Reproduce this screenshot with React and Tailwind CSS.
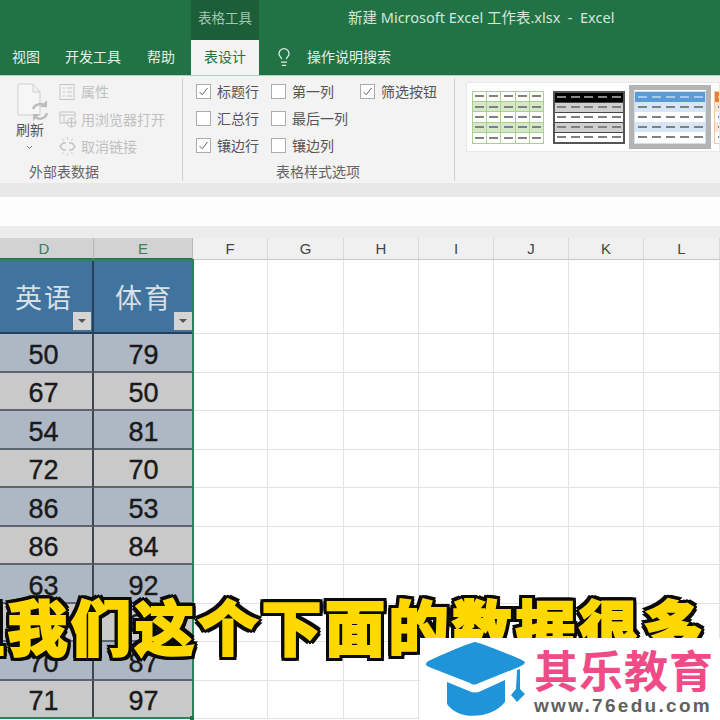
import React from "react";
import { Lightbulb } from "lucide-react";

const cjk = "font-['Noto_Sans_CJK_SC','Noto_Sans',sans-serif]";

function Check({ on }) {
  return (
    <span className="w-[15px] h-[15px] border border-[#ababab] bg-white flex items-center justify-center shrink-0">
      {on && (
        <svg width="11" height="11" viewBox="0 0 11 11" fill="none" stroke="#666" strokeWidth="1">
          <path d="M1.5 6 L4.2 8.8 L9.5 2" />
        </svg>
      )}
    </span>
  );
}

function Opt({ on, label, w }) {
  return (
    <div className="flex items-center gap-[6px] h-[27px] text-[14px] text-[#555] whitespace-nowrap" style={{ width: w }}>
      <Check on={on} />
      <span>{label}</span>
    </div>
  );
}

function DocIcon() {
  return (
    <svg width="34" height="44" viewBox="0 0 34 44" fill="none">
      <path d="M2 1 H17 L24 9 V32 H2 Z M17 1 V9 H24" stroke="#cfcfcf" strokeWidth="1" fill="#f6f6f6" />
      <path d="M17 26 a7.5 7.5 0 0 1 13 -2 M31 30 a7.5 7.5 0 0 1 -13 3" stroke="#bdbdbd" strokeWidth="2.5" />
      <path d="M31 17 v7 h-7 Z M17 38 v-7 h7 Z" fill="#bdbdbd" />
    </svg>
  );
}

function PropIcon() {
  return (
    <svg width="16" height="16" viewBox="0 0 16 16" fill="none" stroke="#c4c4c4">
      <rect x="1" y="0.5" width="14" height="15" />
      <path d="M4 4 h2 M8 4 h5 M4 8 h2 M8 8 h5 M4 12 h2 M8 12 h5" />
    </svg>
  );
}

function BrowserIcon() {
  return (
    <svg width="18" height="17" viewBox="0 0 18 17" fill="none" stroke="#c4c4c4">
      <path d="M9 12 H1 V1 H16 V7 M1 4 H16 M5 4 V12" />
      <circle cx="12.5" cy="11.5" r="4.5" fill="#ececec" />
      <path d="M8 11.5 h9 M12.5 7 v9" />
    </svg>
  );
}

function UnlinkIcon() {
  return (
    <svg width="17" height="19" viewBox="0 0 17 19" fill="none" stroke="#c4c4c4" strokeWidth="1.6">
      <path d="M7 6 H4 L1 9.5 L4 13 H7 M10 6 H13 L16 9.5 L13 13 H10" />
      <path d="M8.5 0 V3 M8.5 16 V19 M3 1.5 L5 4 M14 1.5 L12 4 M3 17.5 L5 15 M14 17.5 L12 15" strokeWidth="0.8" />
    </svg>
  );
}

function Thumb({ border, head, dash, headDash, band, line, inner, thick }) {
  const rows = [head, band, "#ffffff", band, "#ffffff"];
  return (
    <div className={`w-[72px] h-[53px] flex flex-col shrink-0 ${thick ? "border-2" : "border"}`} style={{ borderColor: border }}>
      {rows.map((bg, r) => (
        <div
          key={r}
          className="flex-1 flex"
          style={{ background: bg, borderTop: r && line ? `1px solid ${line}` : undefined }}
        >
          {[0, 1, 2, 3, 4].map((c) => (
            <div
              key={c}
              className="flex-1 flex items-center justify-center"
              style={{ borderLeft: c && inner ? `1px solid ${inner}` : undefined }}
            >
              <span className="w-[9px] h-[2px]" style={{ background: r === 0 ? headDash : dash }} />
            </div>
          ))}
        </div>
      ))}
    </div>
  );
}

const cols = ["D", "E", "F", "G", "H", "I", "J", "K", "L"];
const widths = "grid-cols-[94px_99px_75px_76px_75px_75px_75px_75px_76px]";
const rows = [
  ["50", "79"],
  ["67", "50"],
  ["54", "81"],
  ["72", "70"],
  ["86", "53"],
  ["86", "84"],
  ["63", "92"],
  ["58", "66"],
  ["70", "87"],
  ["71", "97"],
];

function Filter() {
  return (
    <span className="absolute right-[1px] bottom-[2px] w-[18px] h-[18px] bg-[#d4d4d4] flex items-center justify-center">
      <span className="border-x-[4px] border-x-transparent border-t-[4px] border-t-[#555]" />
    </span>
  );
}

export default function App() {
  return (
    <div className={`relative w-[720px] h-[720px] overflow-hidden bg-white ${cjk}`}>
      <div className="h-[75px] bg-[#217346] flex flex-col text-[14px] text-[#e4efe8]">
        <div className="h-[40px] flex">
          <div className="ml-[191px] w-[68px] bg-[#1b5e38] flex items-center justify-center pb-[5px] text-[13.5px] text-[#a4c6b0] whitespace-nowrap">
            表格工具
          </div>
          <div className="ml-[89px] flex items-center pb-[4px] text-[14.5px] text-[#d6e6dc] whitespace-nowrap font-['Noto_Sans','Noto_Sans_CJK_SC',sans-serif]">
            新建 Microsoft Excel 工作表.xlsx&nbsp; -&nbsp; Excel
          </div>
        </div>
        <div className="h-[35px] flex items-center">
          <span className="ml-[12px] w-[53px] pb-[3px]">视图</span>
          <span className="w-[82px] pb-[3px]">开发工具</span>
          <span className="w-[44px] pb-[3px]">帮助</span>
          <span className="w-[68px] h-full bg-[#f3f3f3] text-[#217346] flex items-center justify-center pb-[3px]">表设计</span>
          <Lightbulb size={20} strokeWidth={1.5} className="ml-[15px] mb-[2px] text-[#e4efe8]" />
          <span className="ml-[13px] pb-[3px]">操作说明搜索</span>
        </div>
      </div>

      <div className="h-[108px] bg-[#f3f3f3] flex border-t border-t-[#a9d3ba]">
        <div className="w-[183px] h-[103px] shrink-0 border-r border-[#d2d2d2] flex flex-col mt-[2px]">
          <div className="flex h-[84px]">
            <div className="w-[59px] pl-[16px] flex flex-col items-start pt-[5px] text-[14px] text-[#555]">
              <DocIcon />
              <span className="-mt-[8px]">刷新</span>
              <svg width="7" height="5" viewBox="0 0 7 5" fill="none" stroke="#777" className="ml-[10px] mt-[5px]">
                <path d="M1 1 L3.5 3.5 L6 1" />
              </svg>
            </div>
            <div className="flex flex-col text-[14px] text-[#c0c0c0] whitespace-nowrap">
              <div className="h-[27px] flex items-center gap-[6px]"><PropIcon /><span>属性</span></div>
              <div className="h-[28px] flex items-center gap-[4px]"><BrowserIcon /><span>用浏览器打开</span></div>
              <div className="h-[27px] flex items-center gap-[5px]"><UnlinkIcon /><span>取消链接</span></div>
            </div>
          </div>
          <div className="pt-[1px] pl-[29px] text-[14px] leading-[20px] text-[#666]">外部表数据</div>
        </div>

        <div className="w-[272px] h-[103px] shrink-0 border-r border-[#d2d2d2] flex flex-col mt-[2px] pl-[13px]">
          <div className="flex h-[84px]">
            <div>
              <Opt on label="标题行" w={75} />
              <Opt label="汇总行" w={75} />
              <Opt on label="镶边行" w={75} />
            </div>
            <div>
              <Opt label="第一列" w={89} />
              <Opt label="最后一列" w={89} />
              <Opt label="镶边列" w={89} />
            </div>
            <div>
              <Opt on label="筛选按钮" w={90} />
            </div>
          </div>
          <div className="pt-[1px] pl-[80px] text-[14px] leading-[20px] text-[#666]">表格样式选项</div>
        </div>

        <div className="ml-[11px] mt-[6px] h-[70px] flex-1 bg-white border border-[#e8e8e8] flex items-center pl-[5px] overflow-hidden">
          <Thumb border="#a9d08e" head="#ffffff" band="#d5e8c8" dash="#808080" headDash="#808080" line="#a9d08e" inner="#a9d08e" />
          <div className="w-[9px] shrink-0" />
          <Thumb border="#555" head="#000000" band="#cfcfcf" dash="#808080" headDash="#888" line="#444" thick />
          <div className="ml-[4px] w-[82px] h-[64px] shrink-0 bg-white border-[5px] border-[#b4b4b4] flex items-center justify-center">
            <Thumb border="#cfe0f2" head="#5b9bd5" band="#d6e6f5" dash="#808080" headDash="#a8cbe8" />
          </div>
          <div className="ml-[3px] w-[20px] overflow-hidden shrink-0">
            <Thumb border="#f4c6a0" head="#ed7d31" band="#fbe4d5" dash="#808080" headDash="#f7c7a0" />
          </div>
        </div>
      </div>

      <div className="h-[14px] bg-[#e8e8e8]" />
      <div className="h-[29px] bg-[#fdfdfd]" />
      <div className="h-[12px] bg-[#ececec]" />

      <div className={`grid ${widths} grid-rows-[22px] font-['Liberation_Sans',sans-serif] text-[15px] leading-none`}>
        {cols.map((c, i) => (
          <div
            key={c}
            className={`flex items-center justify-center border-r ${
              i < 2
                ? "bg-[#d2d2d2] text-[#3c7d5a] border-[#b8b8b8] border-b-2 border-b-[#217346]"
                : "bg-[#f0f0f0] text-[#444] border-[#d8d8d8] border-b border-b-[#c8c8c8]"
            } ${i === 0 ? "pr-[5px]" : ""}`}
          >
            {c}
          </div>
        ))}
      </div>

      <div className={`grid ${widths} grid-rows-[74px_repeat(10,38.5px)]`}>
        {[0, 1].map((c) => (
          <div
            key={c}
            className={`relative row-start-1 bg-[#41739f] flex items-center justify-center pt-[3px] text-[27px] tracking-[2px] text-[#d8e0e8] border-b-2 border-b-[#28405a] ${
              c === 0 ? "col-start-1 border-r-2 border-r-[#28405a] pr-[4px]" : "col-start-2 pl-[1px]"
            }`}
          >
            {c === 0 ? "英语" : "体育"}
            <Filter />
          </div>
        ))}
        {[2, 3, 4, 5, 6, 7, 8].map((c) => (
          <div key={c} className="row-start-1 border-r border-b border-[#e2e2e2]" style={{ gridColumnStart: c + 1 }} />
        ))}
        {rows.map((r, i) => (
          <React.Fragment key={i}>
            {r.map((v, c) => (
              <div
                key={c}
                className={`flex items-center justify-center pt-[6px] text-[27px] leading-none text-[#1a1a1a] [-webkit-text-stroke:0.4px_#1a1a1a] font-['Liberation_Sans',sans-serif] border-b-2 border-b-[#5c6470] ${
                  c === 0 ? "border-r-2 border-r-[#3f4650] pr-[5px]" : ""
                } ${i % 2 ? "bg-[#c9c9c9]" : "bg-[#aeb8c4]"}`}
              >
                {v}
              </div>
            ))}
            {[2, 3, 4, 5, 6, 7, 8].map((c) => (
              <div key={c} className="border-r border-b border-[#e2e2e2]" />
            ))}
          </React.Fragment>
        ))}
      </div>

      {/* selection outline over the table */}
      <div className="absolute left-[-3px] top-[259px] w-[197px] h-[460px] border-2 border-[#2b8458] pointer-events-none" />
      <div className="absolute left-[190px] top-[716px] w-[4px] h-[4px] bg-[#217346]" />

      {/* caption */}
      <div className="absolute left-[-56px] top-[589px] whitespace-nowrap text-[60px] leading-[72px] font-black tracking-[3.5px] text-[#ffd800] [-webkit-text-stroke:2px_#ffd800] [filter:drop-shadow(3px_0_0_#0a0a0a)_drop-shadow(-3px_0_0_#0a0a0a)_drop-shadow(0_3px_0_#0a0a0a)_drop-shadow(0_-3px_0_#0a0a0a)]">
        但我们这个下面的数据很多
      </div>

      {/* logo */}
      <div className="absolute left-[420px] top-[638px] w-[300px] h-[82px] bg-white flex items-start">
        <svg width="102" height="78" viewBox="0 0 102 78" className="ml-[5px] mt-[4px] shrink-0">
          <path d="M50 0 C53 0 97 17 100 20 C100 22 96 24 94 25 L54 41 C50 43 48 43 45 41 L4 25 C1 24 0 22 2 20 C8 16 47 0 50 0 Z" fill="#1f94d8" />
          <path d="M22 40 L44 49 C48 51 52 51 56 49 L80 38 V60 C68 76 34 80 22 62 Z" fill="#1f94d8" />
          <path d="M92 28 L95 27 V47 L100 52 L92 60 L86 53 L91 47 Z" fill="#1f94d8" />
        </svg>
        <div className="ml-[7px] flex flex-col">
          <div className="text-[44px] leading-[48px] mt-[7px] font-bold tracking-[1px] text-[#ef4b87] whitespace-nowrap">其乐教育</div>
          <div className="text-[19px] leading-[22px] mt-[2px] font-bold tracking-[2.3px] text-[#616161] font-['Liberation_Sans',sans-serif] whitespace-nowrap">www.76edu.com</div>
        </div>
      </div>
    </div>
  );
}
